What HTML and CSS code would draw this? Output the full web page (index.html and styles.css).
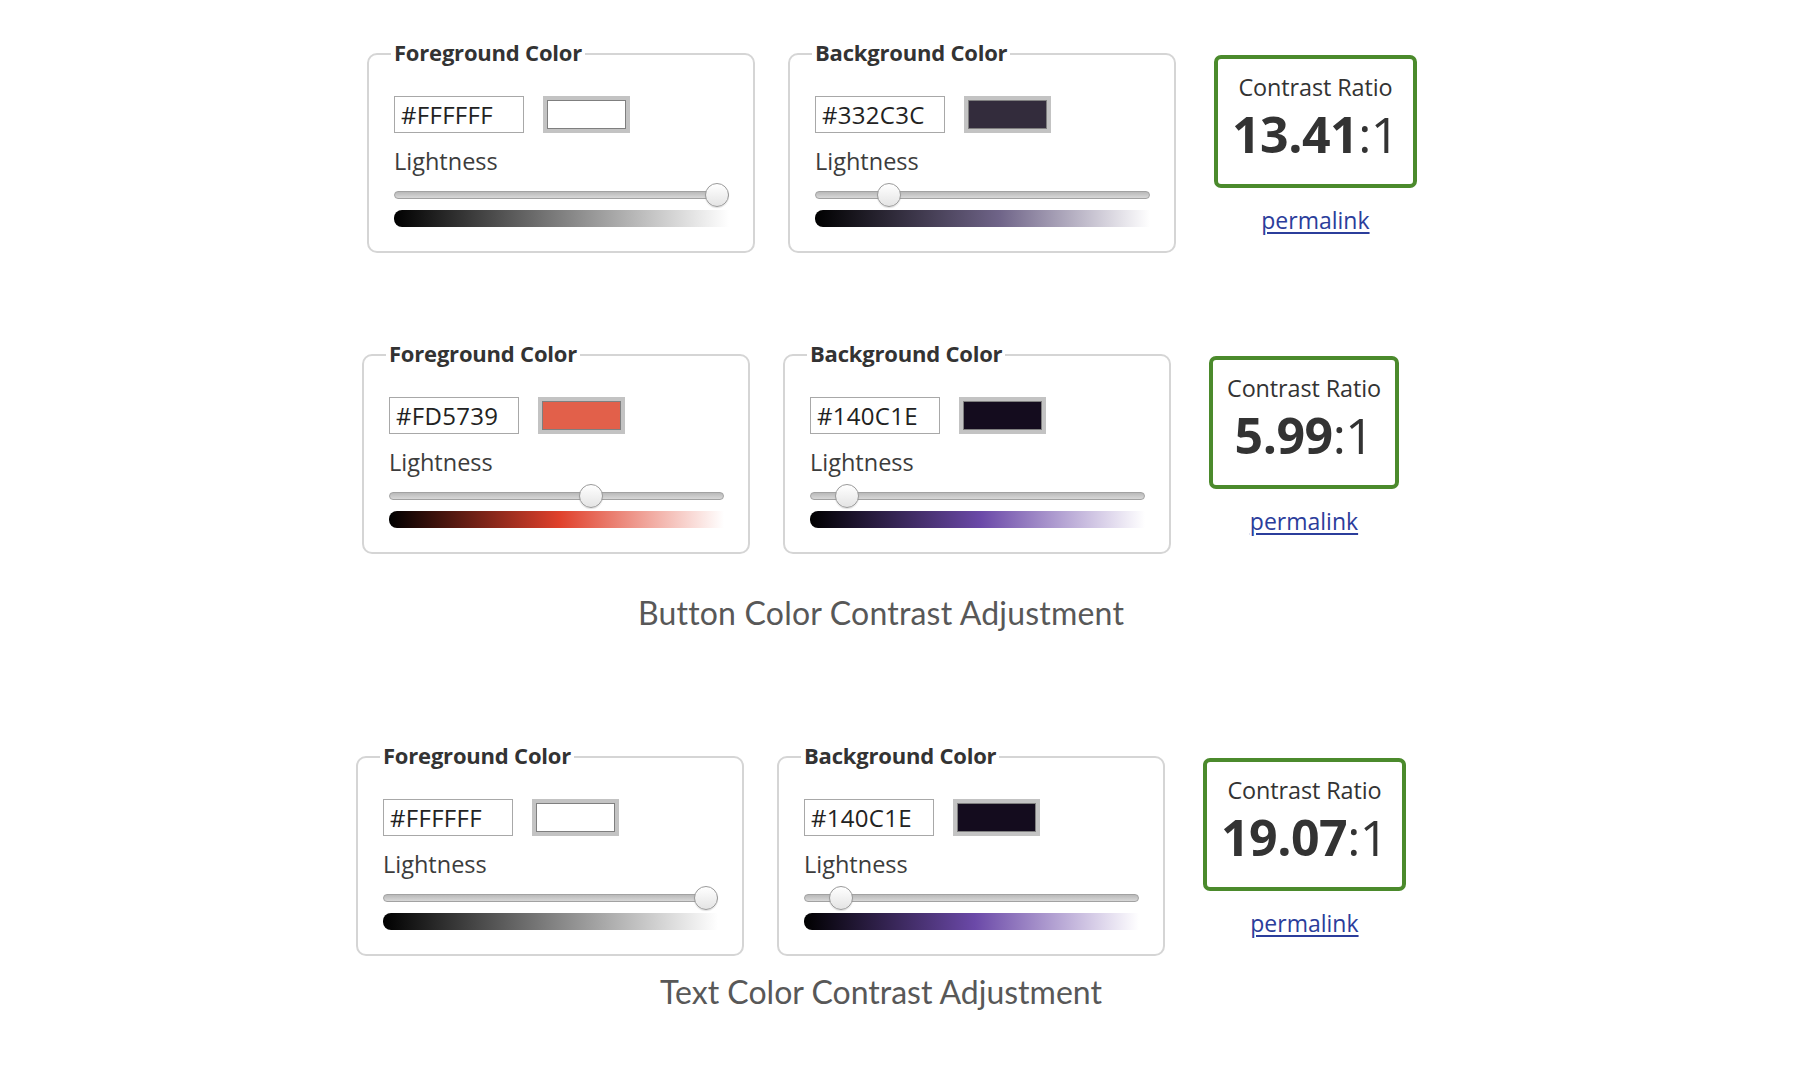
FILE: index.html
```html
<!DOCTYPE html>
<html lang="en">
<head>
<meta charset="utf-8">
<title>Color Contrast Adjustment</title>
<link rel="stylesheet" href="styles.css">
</head>
<body>
<main class="page">

  <section class="tool tool--a">
    <fieldset class="picker">
      <legend class="picker__legend">Foreground Color</legend>
      <div class="picker__inputs">
        <input class="hex" type="text" value="#FFFFFF" readonly>
        <span class="swatch"><span class="swatch__fill" style="--c:#ffffff"></span></span>
      </div>
      <div class="picker__label">Lightness</div>
      <div class="slider">
        <div class="slider__track"></div>
        <div class="slider__thumb" style="--v:1"></div>
      </div>
      <div class="ramp" style="--mid:#808080;--pos:50%"></div>
    </fieldset>
    <fieldset class="picker">
      <legend class="picker__legend">Background Color</legend>
      <div class="picker__inputs">
        <input class="hex" type="text" value="#332C3C" readonly>
        <span class="swatch"><span class="swatch__fill" style="--c:#332c3c"></span></span>
      </div>
      <div class="picker__label">Lightness</div>
      <div class="slider">
        <div class="slider__track"></div>
        <div class="slider__thumb" style="--v:0.2"></div>
      </div>
      <div class="ramp" style="--mid:#6f6488;--pos:55%"></div>
    </fieldset>
    <div class="result">
      <div class="ratio-box">
        <div class="ratio-box__label">Contrast Ratio</div>
        <div class="ratio-box__value"><b>13.41</b>:1</div>
      </div>
      <a class="permalink" href="#">permalink</a>
    </div>
  </section>

  <section class="tool tool--b">
    <fieldset class="picker">
      <legend class="picker__legend">Foreground Color</legend>
      <div class="picker__inputs">
        <input class="hex" type="text" value="#FD5739" readonly>
        <span class="swatch"><span class="swatch__fill" style="--c:#e2604a"></span></span>
      </div>
      <div class="picker__label">Lightness</div>
      <div class="slider">
        <div class="slider__track"></div>
        <div class="slider__thumb" style="--v:0.61"></div>
      </div>
      <div class="ramp" style="--mid:#e0412c;--pos:51%"></div>
    </fieldset>
    <fieldset class="picker">
      <legend class="picker__legend">Background Color</legend>
      <div class="picker__inputs">
        <input class="hex" type="text" value="#140C1E" readonly>
        <span class="swatch"><span class="swatch__fill" style="--c:#140c1e"></span></span>
      </div>
      <div class="picker__label">Lightness</div>
      <div class="slider">
        <div class="slider__track"></div>
        <div class="slider__thumb" style="--v:0.08"></div>
      </div>
      <div class="ramp" style="--mid:#6b49a8;--pos:51%"></div>
    </fieldset>
    <div class="result">
      <div class="ratio-box">
        <div class="ratio-box__label">Contrast Ratio</div>
        <div class="ratio-box__value"><b>5.99</b>:1</div>
      </div>
      <a class="permalink" href="#">permalink</a>
    </div>
  </section>

  <p class="caption caption--button">Button Color Contrast Adjustment</p>

  <section class="tool tool--c">
    <fieldset class="picker">
      <legend class="picker__legend">Foreground Color</legend>
      <div class="picker__inputs">
        <input class="hex" type="text" value="#FFFFFF" readonly>
        <span class="swatch"><span class="swatch__fill" style="--c:#ffffff"></span></span>
      </div>
      <div class="picker__label">Lightness</div>
      <div class="slider">
        <div class="slider__track"></div>
        <div class="slider__thumb" style="--v:1"></div>
      </div>
      <div class="ramp" style="--mid:#808080;--pos:50%"></div>
    </fieldset>
    <fieldset class="picker">
      <legend class="picker__legend">Background Color</legend>
      <div class="picker__inputs">
        <input class="hex" type="text" value="#140C1E" readonly>
        <span class="swatch"><span class="swatch__fill" style="--c:#140c1e"></span></span>
      </div>
      <div class="picker__label">Lightness</div>
      <div class="slider">
        <div class="slider__track"></div>
        <div class="slider__thumb" style="--v:0.08"></div>
      </div>
      <div class="ramp" style="--mid:#6b49a8;--pos:51%"></div>
    </fieldset>
    <div class="result">
      <div class="ratio-box">
        <div class="ratio-box__label">Contrast Ratio</div>
        <div class="ratio-box__value"><b>19.07</b>:1</div>
      </div>
      <a class="permalink" href="#">permalink</a>
    </div>
  </section>

  <p class="caption caption--text">Text Color Contrast Adjustment</p>

</main>
</body>
</html>
```

FILE: styles.css
```css
html, body {
  margin: 0;
  padding: 0;
  background: #ffffff;
}

body {
  font-family: "Open Sans", "Noto Sans", sans-serif;
  color: #333333;
}

.page {
  padding-top: 37px;
  width: 1796px;
  box-sizing: border-box;
}

/* ---------- rows ---------- */
.tool {
  display: flex;
  align-items: flex-start;
  gap: 33px;
}

.tool--a { padding-left: 367px; }
.tool--b { padding-left: 362px; margin-top: 85px; }
.tool--c { padding-left: 356px; margin-top: 108px; }

/* ---------- picker fieldset ---------- */
.picker {
  box-sizing: border-box;
  width: 388px;
  margin: 0;
  padding: 0 24px 24px 25px;
  border: 2px solid #d5d5d5;
  border-radius: 10px;
  min-inline-size: 0;
}

.picker__legend {
  font-family: "Open Sans", sans-serif;
  font-weight: 700;
  font-size: 22px;
  line-height: 30px;
  color: #333333;
  padding: 0 3px 4px;
  margin-left: -3px;
  letter-spacing: -0.2px;
}

.picker__inputs {
  display: flex;
  align-items: center;
  gap: 19px;
  margin-top: 25px;
}

.hex {
  box-sizing: border-box;
  width: 130px;
  height: 37px;
  margin: 0;
  padding: 0 6px;
  border: 1px solid #a8a8a8;
  border-radius: 0;
  font-family: "Open Sans", sans-serif;
  font-size: 24px;
  letter-spacing: 0.3px;
  color: #222222;
  background: #ffffff;
  outline: none;
}

.swatch {
  box-sizing: border-box;
  display: block;
  width: 87px;
  height: 37px;
  padding: 4px;
  background: #c3c3c3;
}

.swatch__fill {
  box-sizing: border-box;
  display: block;
  width: 100%;
  height: 100%;
  border: 1px solid #7f7f7f;
  background: var(--c);
}

.picker__label {
  margin-top: 13px;
  font-size: 23.5px;
  line-height: 30px;
  color: #3c3c3c;
}

/* ---------- slider ---------- */
.slider {
  position: relative;
  height: 24px;
  margin-top: 7px;
  display: flex;
  align-items: center;
}

.slider__track {
  box-sizing: border-box;
  flex: 1;
  height: 8px;
  border: 1px solid #a2a2a2;
  border-radius: 4px;
  background: linear-gradient(#b9b9b9, #d8d8d8);
}

.slider__thumb {
  box-sizing: border-box;
  position: absolute;
  top: 0;
  left: calc((100% - 24px) * var(--v));
  width: 24px;
  height: 24px;
  border-radius: 50%;
  border: 1px solid #9a9a9a;
  background: linear-gradient(#ffffff, #e4e4e4);
  box-shadow: 0 1px 1px rgba(0, 0, 0, 0.12);
}

.ramp {
  height: 17px;
  margin-top: 3px;
  border-radius: 8px 0 0 8px;
  background: linear-gradient(to right, #000000 0%, var(--mid) var(--pos), #ffffff 100%);
}

/* ---------- result ---------- */
.result {
  display: flex;
  flex-direction: column;
  align-items: center;
  margin-top: 18px;
  margin-left: 5px;
}

.ratio-box {
  box-sizing: border-box;
  border: 4px solid #4b8a2c;
  border-radius: 7px;
  padding: 12px 14px 19px;
  text-align: center;
}

.ratio-box__label {
  font-size: 23.4px;
  line-height: 32px;
  color: #333333;
  letter-spacing: -0.1px;
}

.ratio-box__value {
  font-size: 50px;
  line-height: 62px;
  color: #333333;
  font-weight: 400;
  letter-spacing: -0.5px;
}

.ratio-box__value b {
  font-weight: 700;
}

.permalink {
  margin-top: 17px;
  font-size: 23px;
  line-height: 30px;
  color: #2b3d9b;
  text-decoration: underline;
  text-underline-offset: 3px;
}

/* ---------- captions ---------- */
.caption {
  margin: 0;
  padding-right: 34px;
  text-align: center;
  font-family: "Lato", "Open Sans", sans-serif;
  font-size: 32px;
  line-height: 38px;
  color: #585858;
  letter-spacing: 0.2px;
}

.caption--button { margin-top: 40px; }
.caption--text { margin-top: 17px; letter-spacing: 0; }
```
